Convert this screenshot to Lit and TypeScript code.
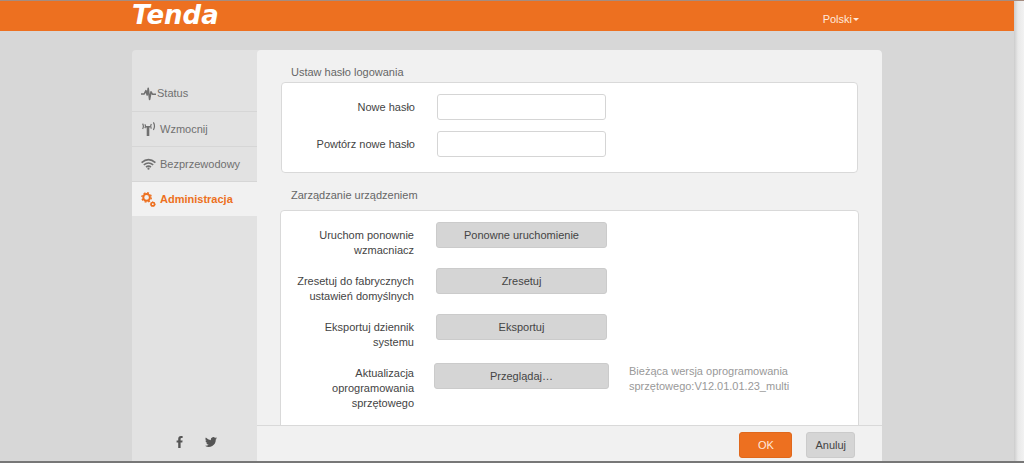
import { LitElement, html, css, svg } from "lit";
import { customElement, state } from "lit/decorators.js";

const icons: Record<string, unknown> = {
  status: svg`<svg class="icon" viewBox="0 0 15 14" width="15" height="14" fill="none" stroke="currentColor" stroke-width="1.6" stroke-linejoin="round"><path d="M0 7h3.2l1.7-3.4L6.2 8 7.2 1.4l1.4 11L10 4.8l1.4 2.4H15"/></svg>`,
  boost: svg`<svg class="icon" viewBox="0 0 15 16" width="15" height="16" fill="none" stroke="currentColor"><path d="M3.8 3.4q1.4 1.8 0 3.8M1.6 2.6q1.6 2.6 0 5.4M10.4 3q-1.4 2.2 0 4.6M12.4 1.4q2.2 3.6 0 7.6" stroke-width="1.2"/><path d="M7 15V6" stroke-width="2.6"/><path d="M4.4 5h5.2L7 8.6z" fill="currentColor" stroke="none"/></svg>`,
  wifi: svg`<svg class="icon" viewBox="0 0 15 12" width="15" height="12" fill="none" stroke="currentColor" stroke-width="1.6"><path d="M.6 4.6q6.9-6 13.8 0M2.8 6.9q4.7-3.8 9.4 0M5 9q2.5-1.8 5 0"/><circle cx="7.5" cy="10.7" r="1.1" fill="currentColor" stroke="none"/></svg>`,
  gears: svg`<svg class="icon" viewBox="0 0 15 15" width="15" height="15" fill="none" stroke="currentColor"><circle cx="5.6" cy="5.4" r="3.3" stroke-width="2"/><circle cx="5.6" cy="5.4" r="4.7" stroke-width="1.4" stroke-dasharray="1.9 1.79"/><circle cx="11.8" cy="12.2" r="1.7" stroke-width="1.6"/><circle cx="11.8" cy="12.2" r="2.4" stroke-width=".8" stroke-dasharray="1.1 .785"/></svg>`,
};

const menu = [
  { id: "status", label: "Status" },
  { id: "boost", label: "Wzmocnij" },
  { id: "wifi", label: "Bezprzewodowy" },
  { id: "gears", label: "Administracja" },
];

@customElement("app-root")
export class AppRoot extends LitElement {
  @state() private active = "gears";

  static styles = css`
    :host {
      display: flex;
      height: 100vh;
      box-sizing: border-box;
      border-top: 1px solid #a58c80;
      border-bottom: 2px solid #777;
      background: #d7d7d7;
      color: #444;
      font: 11px/15px "Liberation Sans", Arial, sans-serif;
    }
    *, *::before { box-sizing: border-box; }
    .page { flex: 1; min-width: 0; display: flex; flex-direction: column; }
    .gutter { width: 10px; background: linear-gradient(90deg, #ccc, #e9e9e9 40%, #f2f2f2); }
    .bar { background: #ed7020; }
    .wrap { width: 100%; max-width: 750px; margin: 0 auto; }
    .head { height: 30px; display: flex; justify-content: space-between; padding-right: 23px; color: #fff; }
    .logo { font: italic bold 26px/28px "DejaVu Sans", Verdana, sans-serif; color: #fff; text-decoration: none; }
    .lang {
      align-self: flex-end; display: flex; align-items: center; gap: 1px;
      padding: 0; margin-bottom: 4px; border: 0; background: none;
      color: #ffe9dc; font: inherit;
    }
    .caret { border: 3px solid transparent; border-top-color: currentColor; border-bottom: 0; }
    .panel { flex: 1; min-height: 0; margin-top: 19px; display: flex; border-radius: 4px 4px 0 0; overflow: hidden; background: #e2e2e2; }
    .side { width: 125px; flex: none; display: flex; flex-direction: column; justify-content: space-between; padding-top: 26px; }
    .menu { margin: 0; padding: 0; list-style: none; }
    .item + .item { border-top: 1px solid #d6d6d6; }
    .link { display: flex; align-items: center; gap: 4px; height: 34px; padding-left: 9px; color: #707070; text-decoration: none; }
    .item:first-child .link { height: 35px; gap: 1px; }
    .on { background: #f1f1f1; color: #ed7020; font-weight: bold; }
    .icon { flex: none; }
    .social { display: flex; justify-content: center; gap: 19px; padding: 0 0 13px 2px; }
    .social a { display: flex; color: #555; }
    .main { flex: 1; min-width: 0; display: flex; flex-direction: column; background: #f1f1f1; border-radius: 4px 4px 0 0; }
    .content { flex: 1; min-height: 0; overflow: hidden; padding: 15px 23px 0; }
    .title { margin: 0 11px 2px; font: inherit; color: #666; }
    .card { background: #fff; border: 1px solid #d9d9d9; border-radius: 4px; }
    .login { margin: 0 1px 15px; padding: 11px 0 15px; display: grid; gap: 11px; }
    .title.second { margin-bottom: 7px; }
    .device { padding: 11px 0 40px; display: grid; gap: 10px; }
    .row { display: grid; grid-template-columns: 133px 175px 1fr; column-gap: 20px; align-items: start; }
    .label { text-align: right; padding-top: 6px; }
    .field { width: 169px; height: 26px; margin-left: 2px; border: 1px solid #d5d5d5; border-radius: 3px; background: #fff; padding: 0 6px; font: inherit; }
    .btn { height: 26px; border: 1px solid #cbcbcb; border-radius: 3px; background: #d5d5d5; color: #444; font: inherit; padding: 0 8px; }
    .row .btn { margin: 0 2px; }
    .row.last { padding-top: 3px; }
    .row.last .btn { margin: 0; }
    .row.last .label { padding-top: 3px; }
    .note { margin: 0; padding-top: 1px; color: #999; max-width: 180px; overflow-wrap: anywhere; }
    .foot { height: 36px; border-top: 1px solid #d9d9d9; display: flex; justify-content: flex-end; align-items: center; gap: 14px; padding: 3px 27px 0 0; }
    .ok { min-width: 53px; background: #ed7020; border-color: #e0681c; color: #ffe9dc; }
  `;

  private actionRow(id: string, label: string, text: string) {
    return html`<div class="row">
      <label class="label" for=${id}>${label}</label>
      <button class="btn" id=${id} type="button">${text}</button>
    </div>`;
  }

  render() {
    return html`
      <div class="page">
        <header class="bar">
          <div class="wrap head">
            <a class="logo" href="#">Tenda</a>
            <button class="lang" type="button">Polski<span class="caret"></span></button>
          </div>
        </header>
        <div class="wrap panel">
          <nav class="side">
            <ul class="menu">
              ${menu.map((m) => html`<li class="item">
                <a class="link ${this.active === m.id ? "on" : ""}" href="#"
                  @click=${(e: Event) => { e.preventDefault(); this.active = m.id; }}
                >${icons[m.id]}<span>${m.label}</span></a>
              </li>`)}
            </ul>
            <div class="social">
              <a href="#" aria-label="Facebook"><svg viewBox="0 0 12 12" width="12" height="12" fill="currentColor"><path d="M4.2 12V6.6H2.6V4.4h1.6V3c0-2 1-3 2.8-3h1.6v2.1H7.4c-.6 0-.8.3-.8.9v1.4h2l-.3 2.2H6.6V12z"/></svg></a>
              <a href="#" aria-label="Twitter"><svg viewBox="0 0 24 24" width="12" height="12" fill="currentColor"><path d="M24 4.6a10 10 0 0 1-2.8.8 5 5 0 0 0 2.1-2.7 10 10 0 0 1-3.1 1.2 4.9 4.9 0 0 0-8.4 4.5A14 14 0 0 1 1.7 3.2a4.9 4.9 0 0 0 1.5 6.5 4.9 4.9 0 0 1-2.2-.6 4.9 4.9 0 0 0 3.9 4.9 5 5 0 0 1-2.2.1 4.9 4.9 0 0 0 4.6 3.4A9.9 9.9 0 0 1 0 19.5 14 14 0 0 0 21.5 7.1 10 10 0 0 0 24 4.6z"/></svg></a>
            </div>
          </nav>
          <main class="main">
            <div class="content">
              <h2 class="title">Ustaw hasło logowania</h2>
              <section class="card login">
                <div class="row"><label class="label" for="pw">Nowe hasło</label><input class="field" id="pw" type="password" /></div>
                <div class="row"><label class="label" for="pw2">Powtórz nowe hasło</label><input class="field" id="pw2" type="password" /></div>
              </section>
              <h2 class="title second">Zarządzanie urządzeniem</h2>
              <section class="card device">
                ${this.actionRow("reboot", "Uruchom ponownie wzmacniacz", "Ponowne uruchomienie")}
                ${this.actionRow("reset", "Zresetuj do fabrycznych ustawień domyślnych", "Zresetuj")}
                ${this.actionRow("export", "Eksportuj dziennik systemu", "Eksportuj")}
                <div class="row last">
                  <label class="label" for="browse">Aktualizacja oprogramowania sprzętowego</label>
                  <button class="btn" id="browse" type="button">Przeglądaj…</button>
                  <p class="note">Bieżąca wersja oprogramowania sprzętowego:V12.01.01.23_multi</p>
                </div>
              </section>
            </div>
            <footer class="foot">
              <button class="btn ok" type="button">OK</button>
              <button class="btn" type="button">Anuluj</button>
            </footer>
          </main>
        </div>
      </div>
      <div class="gutter"></div>
    `;
  }
}
